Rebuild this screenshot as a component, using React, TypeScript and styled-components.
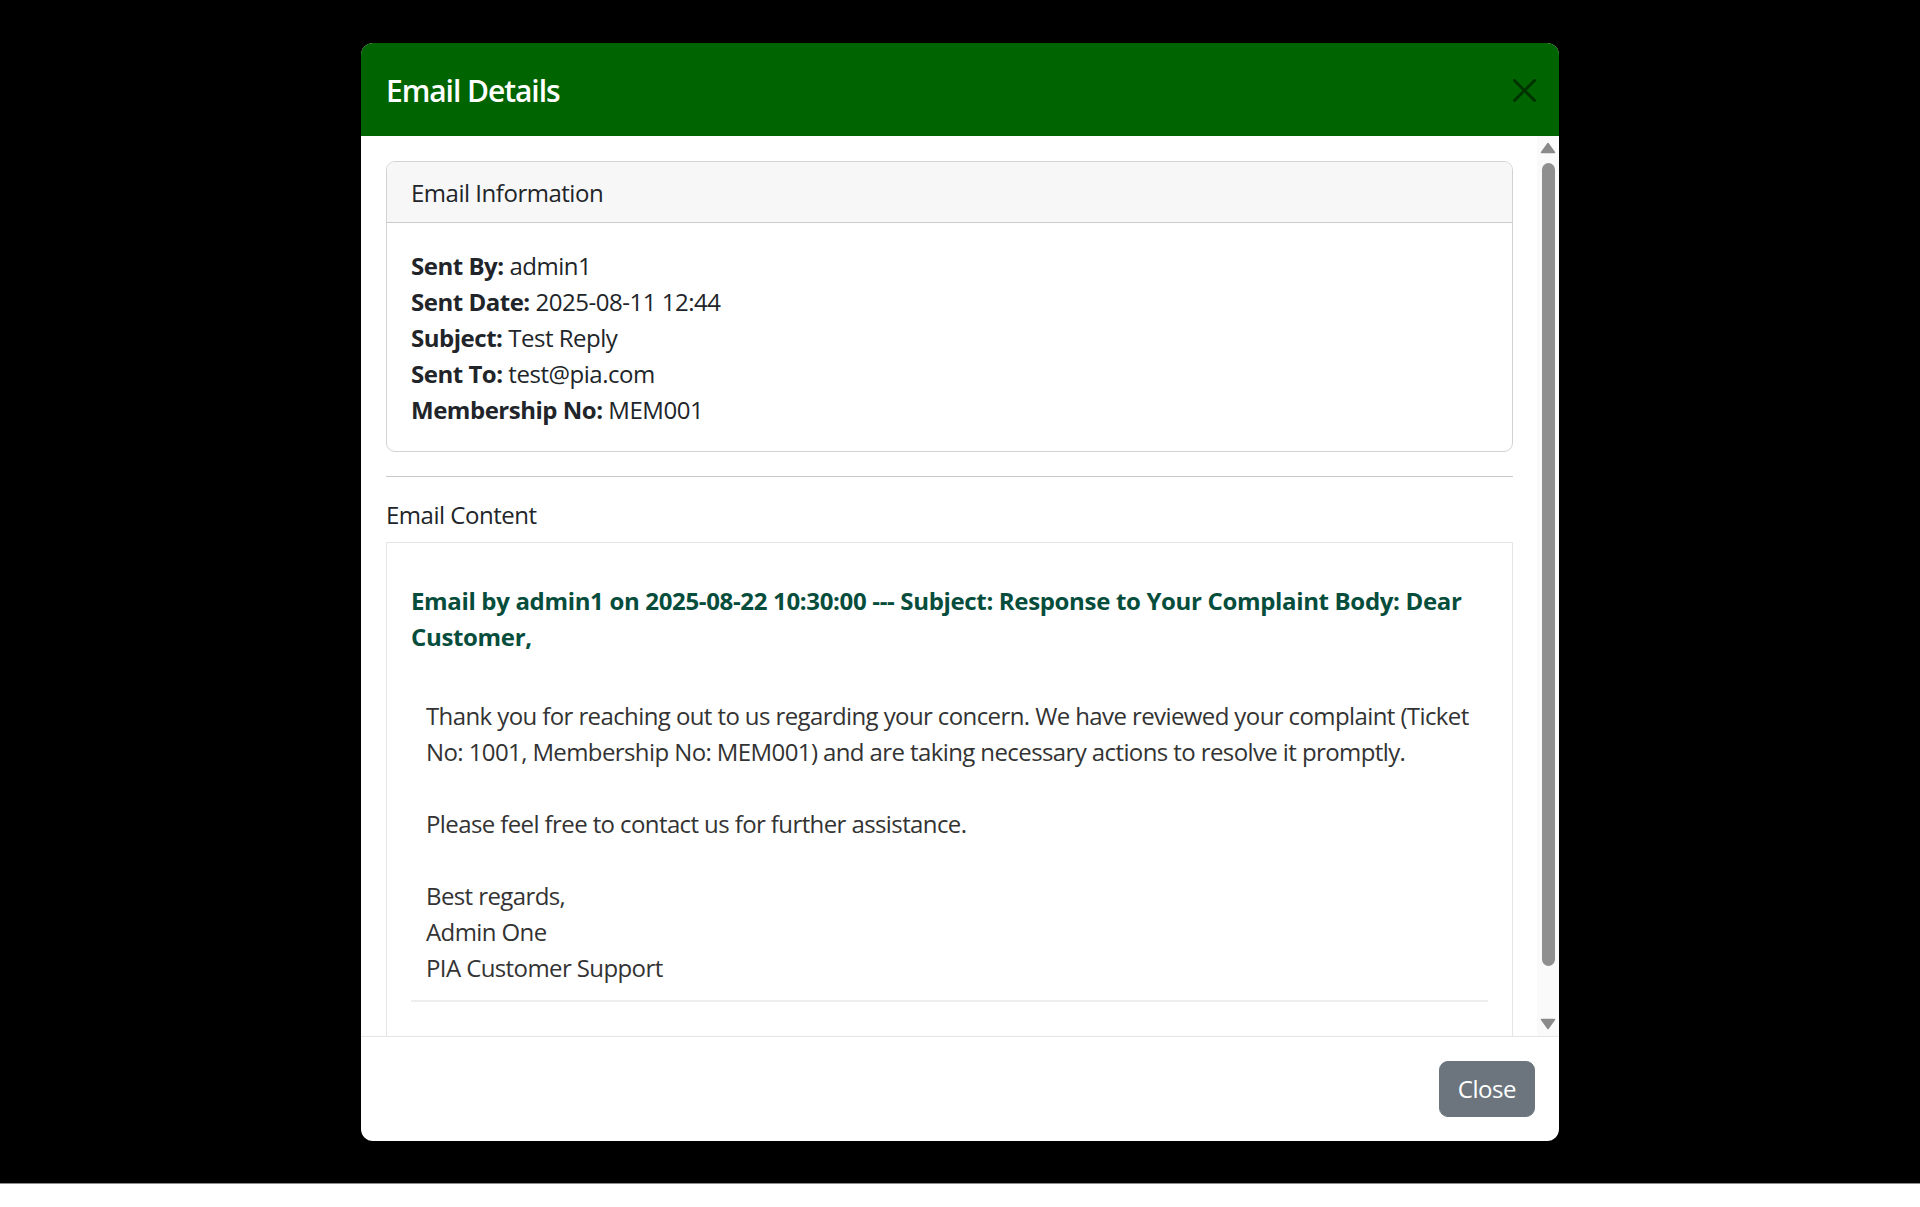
import React from "react";
import styled, { createGlobalStyle } from "styled-components";

const GlobalStyle = createGlobalStyle`
  html, body { margin: 0; padding: 0; background: #ffffff; }
  body {
    font-family: "Open Sans", "Noto Sans", sans-serif;
    font-size: 24px;
    line-height: 1.5;
    color: #212529;
    letter-spacing: -0.02em;
  }
  * { box-sizing: border-box; }
`;

const Backdrop = styled.div`
  height: 1184px;
  background: #000000;
  border-bottom: 1px solid #8c8c8c;
  display: flex;
  justify-content: center;
  align-items: flex-start;
  padding-top: 43px;
`;

const Modal = styled.div`
  width: 1198px;
  height: 1098px;
  display: flex;
  flex-direction: column;
  background: #ffffff;
  border-radius: 12px;
  overflow: hidden;
`;

const Header = styled.div`
  flex: 0 0 93px;
  background: #006400;
  display: flex;
  align-items: center;
  justify-content: space-between;
  padding: 1px 23px 0 25px;
`;

const Title = styled.h5`
  margin: 0;
  font-size: 30px;
  line-height: 45px;
  font-weight: 600;
  letter-spacing: -0.035em;
  color: #ffffff;
`;

const CloseX = styled.button`
  width: 24px;
  height: 24px;
  padding: 0;
  border: 0;
  background: transparent;
  display: flex;
  align-items: center;
  justify-content: center;
  cursor: pointer;
  svg { display: block; }
`;

const BodyRow = styled.div`
  flex: 1 1 auto;
  min-height: 0;
  display: flex;
`;

const Body = styled.div`
  flex: 1 1 auto;
  min-width: 0;
  overflow: hidden;
  padding: 25px 24px 24px 25px;
`;

const Scrollbar = styled.div`
  flex: 0 0 22px;
  background: #fafafa;
  display: flex;
  flex-direction: column;
`;

const ScrollButton = styled.div`
  flex: 0 0 24px;
  display: flex;
  align-items: center;
  justify-content: center;
  svg { display: block; }
`;

const Track = styled.div`
  flex: 1 1 auto;
  min-height: 0;
  padding: 3px 4px 0 5px;
`;

const Thumb = styled.div<{ $ratio: number }>`
  height: ${(p) => p.$ratio * 100}%;
  background: #8f8f8f;
  border-radius: 7px;
`;

const Card = styled.div`
  border: 1px solid rgba(0, 0, 0, 0.175);
  border-radius: 9px;
  overflow: hidden;
`;

const CardHeader = styled.div`
  background: #f7f7f7;
  padding: 13px 24px 11px;
  border-bottom: 1px solid rgba(0, 0, 0, 0.175);
  line-height: 36px;
`;

const CardBody = styled.div`
  padding: 25px 24px 23px;
`;

const InfoLine = styled.div`
  line-height: 36px;
  strong { font-weight: 700; }
`;

const Rule = styled.hr`
  margin: 24px 0;
  border: 0;
  border-top: 1px solid #c8c9ca;
`;

const SectionTitle = styled.h6`
  margin: 0 0 12px;
  font-size: 24px;
  line-height: 1.2;
  font-weight: 500;
`;

const ContentBox = styled.div`
  border: 1px solid #e3e5e8;
  padding: 24px;
`;

const Entry = styled.div`
  padding-top: 16px;
  padding-bottom: 14px;
  border-bottom: 2px solid #eeeeee;
  margin-bottom: 40px;
`;

const EntryHeading = styled.div`
  font-weight: 700;
  color: #064d3c;
  line-height: 36px;
  letter-spacing: -0.014em;
  margin-bottom: 42px;
`;

const EntryText = styled.div`
  padding-left: 15px;
  padding-top: 1px;
  white-space: pre-wrap;
  line-height: 36px;
  letter-spacing: -0.025em;
  color: #333333;
`;

const Footer = styled.div`
  flex: 0 0 auto;
  border-top: 1px solid #e6e6e6;
  padding: 18px;
  display: flex;
  justify-content: flex-end;
  align-items: center;
`;

const Button = styled.button`
  margin: 6px;
  height: 56px;
  padding: 9px 18px;
  font-family: inherit;
  font-size: 24px;
  line-height: 36px;
  letter-spacing: -0.02em;
  color: #ffffff;
  background: #6c757d;
  border: 1px solid #6c757d;
  border-radius: 9px;
  cursor: pointer;
`;

const info: [string, string][] = [
  ["Sent By:", "admin1"],
  ["Sent Date:", "2025-08-11 12:44"],
  ["Subject:", "Test Reply"],
  ["Sent To:", "test@pia.com"],
  ["Membership No:", "MEM001"],
];

const bodyText =
  "Thank you for reaching out to us regarding your concern. We have reviewed your complaint (Ticket No: 1001, Membership No: MEM001) and are taking necessary actions to resolve it promptly.\n\nPlease feel free to contact us for further assistance.\n\nBest regards,\nAdmin One\nPIA Customer Support";

function Arrow({ up }: { up: boolean }) {
  return (
    <svg width="16" height="12" viewBox="0 0 16 12">
      <path
        d={up ? "M1.5 10.5 L8 1.5 L14.5 10.5 Z" : "M1.5 1.5 L8 10.5 L14.5 1.5 Z"}
        fill="#8a8a8a"
        stroke="#8a8a8a"
        strokeWidth="1.5"
        strokeLinejoin="round"
      />
    </svg>
  );
}

export default function App() {
  return (
    <>
      <GlobalStyle />
      <Backdrop>
        <Modal role="dialog" aria-label="Email Details">
          <Header>
            <Title>Email Details</Title>
            <CloseX aria-label="Close">
              <svg width="23" height="23" viewBox="0 0 16 16">
                <path
                  fill="rgba(0,0,0,0.5)"
                  d="M.293.293a1 1 0 0 1 1.414 0L8 6.586 14.293.293a1 1 0 1 1 1.414 1.414L9.414 8l6.293 6.293a1 1 0 0 1-1.414 1.414L8 9.414l-6.293 6.293a1 1 0 0 1-1.414-1.414L6.586 8 .293 1.707a1 1 0 0 1 0-1.414z"
                />
              </svg>
            </CloseX>
          </Header>
          <BodyRow>
            <Body>
              <Card>
                <CardHeader>Email Information</CardHeader>
                <CardBody>
                  {info.map(([k, v]) => (
                    <InfoLine key={k}>
                      <strong>{k}</strong> {v}
                    </InfoLine>
                  ))}
                </CardBody>
              </Card>
              <Rule />
              <SectionTitle>Email Content</SectionTitle>
              <ContentBox>
                <Entry>
                  <EntryHeading>
                    Email by admin1 on 2025-08-22 10:30:00 --- Subject: Response to Your Complaint Body: Dear Customer,
                  </EntryHeading>
                  <EntryText>{bodyText}</EntryText>
                </Entry>
              </ContentBox>
            </Body>
            <Scrollbar aria-hidden="true">
              <ScrollButton>
                <Arrow up />
              </ScrollButton>
              <Track>
                <Thumb $ratio={0.946} />
              </Track>
              <ScrollButton>
                <Arrow up={false} />
              </ScrollButton>
            </Scrollbar>
          </BodyRow>
          <Footer>
            <Button>Close</Button>
          </Footer>
        </Modal>
      </Backdrop>
    </>
  );
}
